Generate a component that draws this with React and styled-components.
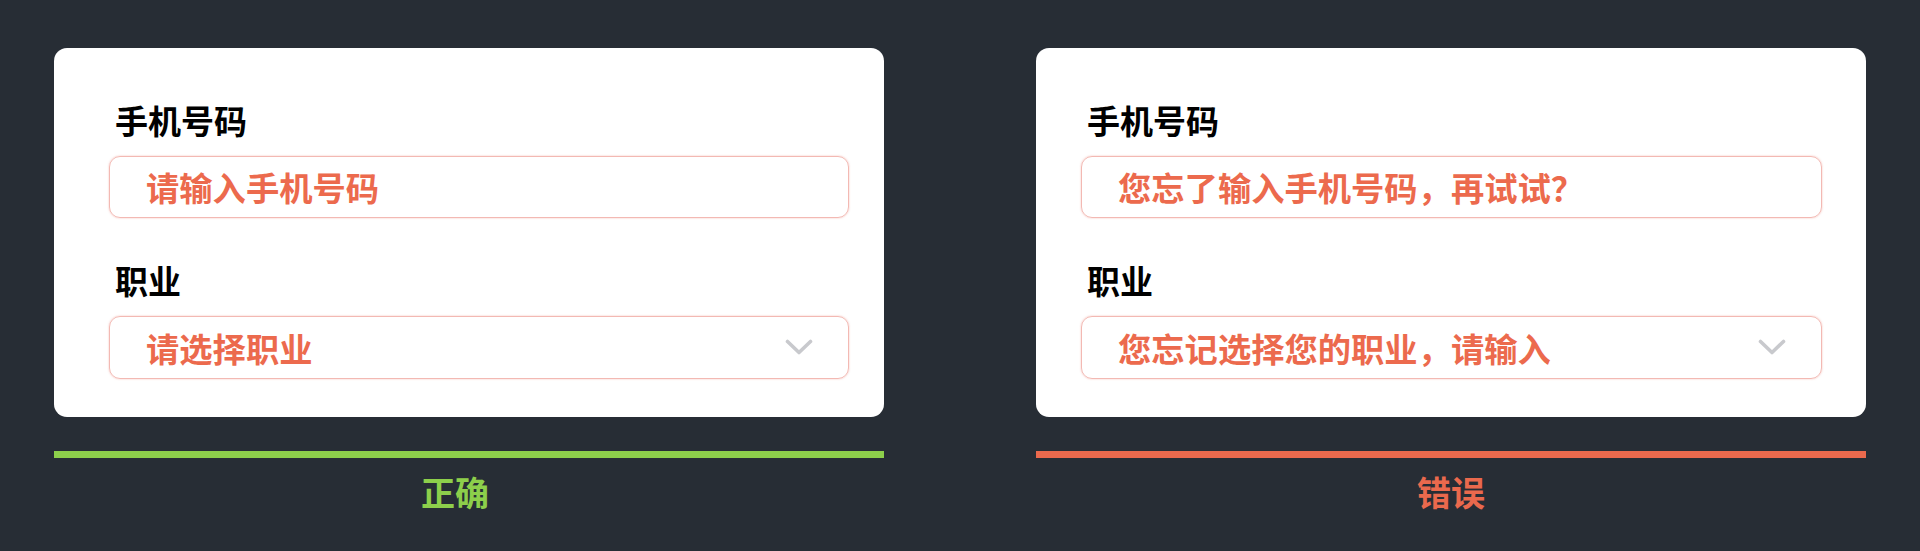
import React from "react";
import styled, { createGlobalStyle } from "styled-components";

const GlobalStyle = createGlobalStyle`
  html, body {
    margin: 0;
    padding: 0;
    background: #272d35;
  }
  body {
    font-family: "Noto Sans CJK SC", "Noto Sans", sans-serif;
  }
`;

const Page = styled.div`
  width: 1920px;
  height: 551px;
  box-sizing: border-box;
  background: #272d35;
  padding: 48px 0 0 54px;
  display: flex;
  gap: 152px;
`;

const Column = styled.div`
  width: 830px;
  display: flex;
  flex-direction: column;
`;

const Card = styled.div`
  background: #ffffff;
  border-radius: 13px;
  height: 369px;
  box-sizing: border-box;
  padding: ${(p) => (p.$variant === "good" ? "52px 35px 0 55px" : "52px 44px 0 45px")};
  display: flex;
  flex-direction: column;
`;

const Field = styled.div`
  display: flex;
  flex-direction: column;
  gap: 16px;
  & + & {
    margin-top: 42px;
  }
`;

const Label = styled.div`
  font-size: 33px;
  line-height: 40px;
  font-weight: 700;
  color: #000000;
  padding-left: 6px;
`;

const Box = styled.div`
  height: ${(p) => (p.$select ? 63 : 62)}px;
  box-sizing: border-box;
  border: 1px solid #f3b9b3;
  box-shadow: 0 0 2px rgba(240, 160, 150, 0.7);
  border-radius: 11px;
  display: flex;
  align-items: center;
  justify-content: space-between;
  padding: 0 35px 0 36px;
`;

const BoxText = styled.span`
  font-size: 33.3px;
  line-height: 40px;
  font-weight: 700;
  color: #ec6a4d;
  white-space: nowrap;
`;

const Bar = styled.div`
  height: 7px;
  margin-top: 34px;
  background: ${(p) => p.$color};
`;

const Caption = styled.div`
  margin-top: 14px;
  text-align: center;
  font-size: 34px;
  line-height: 40px;
  font-weight: 700;
  color: ${(p) => p.$color};
  padding-right: ${(p) => p.$shift || 0}px;
`;

const Chevron = () => (
  <svg width="28" height="18" viewBox="0 0 28 18" aria-hidden="true">
    <polyline
      points="2.5,2.5 14,13.5 25.5,2.5"
      fill="none"
      stroke="#c8c9cd"
      strokeWidth="3.6"
      strokeLinecap="round"
      strokeLinejoin="round"
    />
  </svg>
);

const GREEN = "#8dcf4b";
const RED = "#ea694d";

const Panel = ({ variant, phoneText, jobText, caption, color, shift }) => (
  <Column>
    <Card $variant={variant}>
      <Field>
        <Label>手机号码</Label>
        <Box>
          <BoxText>{phoneText}</BoxText>
        </Box>
      </Field>
      <Field>
        <Label>职业</Label>
        <Box $select>
          <BoxText>{jobText}</BoxText>
          <Chevron />
        </Box>
      </Field>
    </Card>
    <Bar $color={color} />
    <Caption $color={color} $shift={shift}>
      {caption}
    </Caption>
  </Column>
);

export default function App() {
  return (
    <>
      <GlobalStyle />
      <Page>
        <Panel
          variant="good"
          phoneText="请输入手机号码"
          jobText="请选择职业"
          caption="正确"
          color={GREEN}
          shift={28}
        />
        <Panel
          variant="bad"
          phoneText="您忘了输入手机号码，再试试？"
          jobText="您忘记选择您的职业，请输入"
          caption="错误"
          color={RED}
        />
      </Page>
    </>
  );
}
